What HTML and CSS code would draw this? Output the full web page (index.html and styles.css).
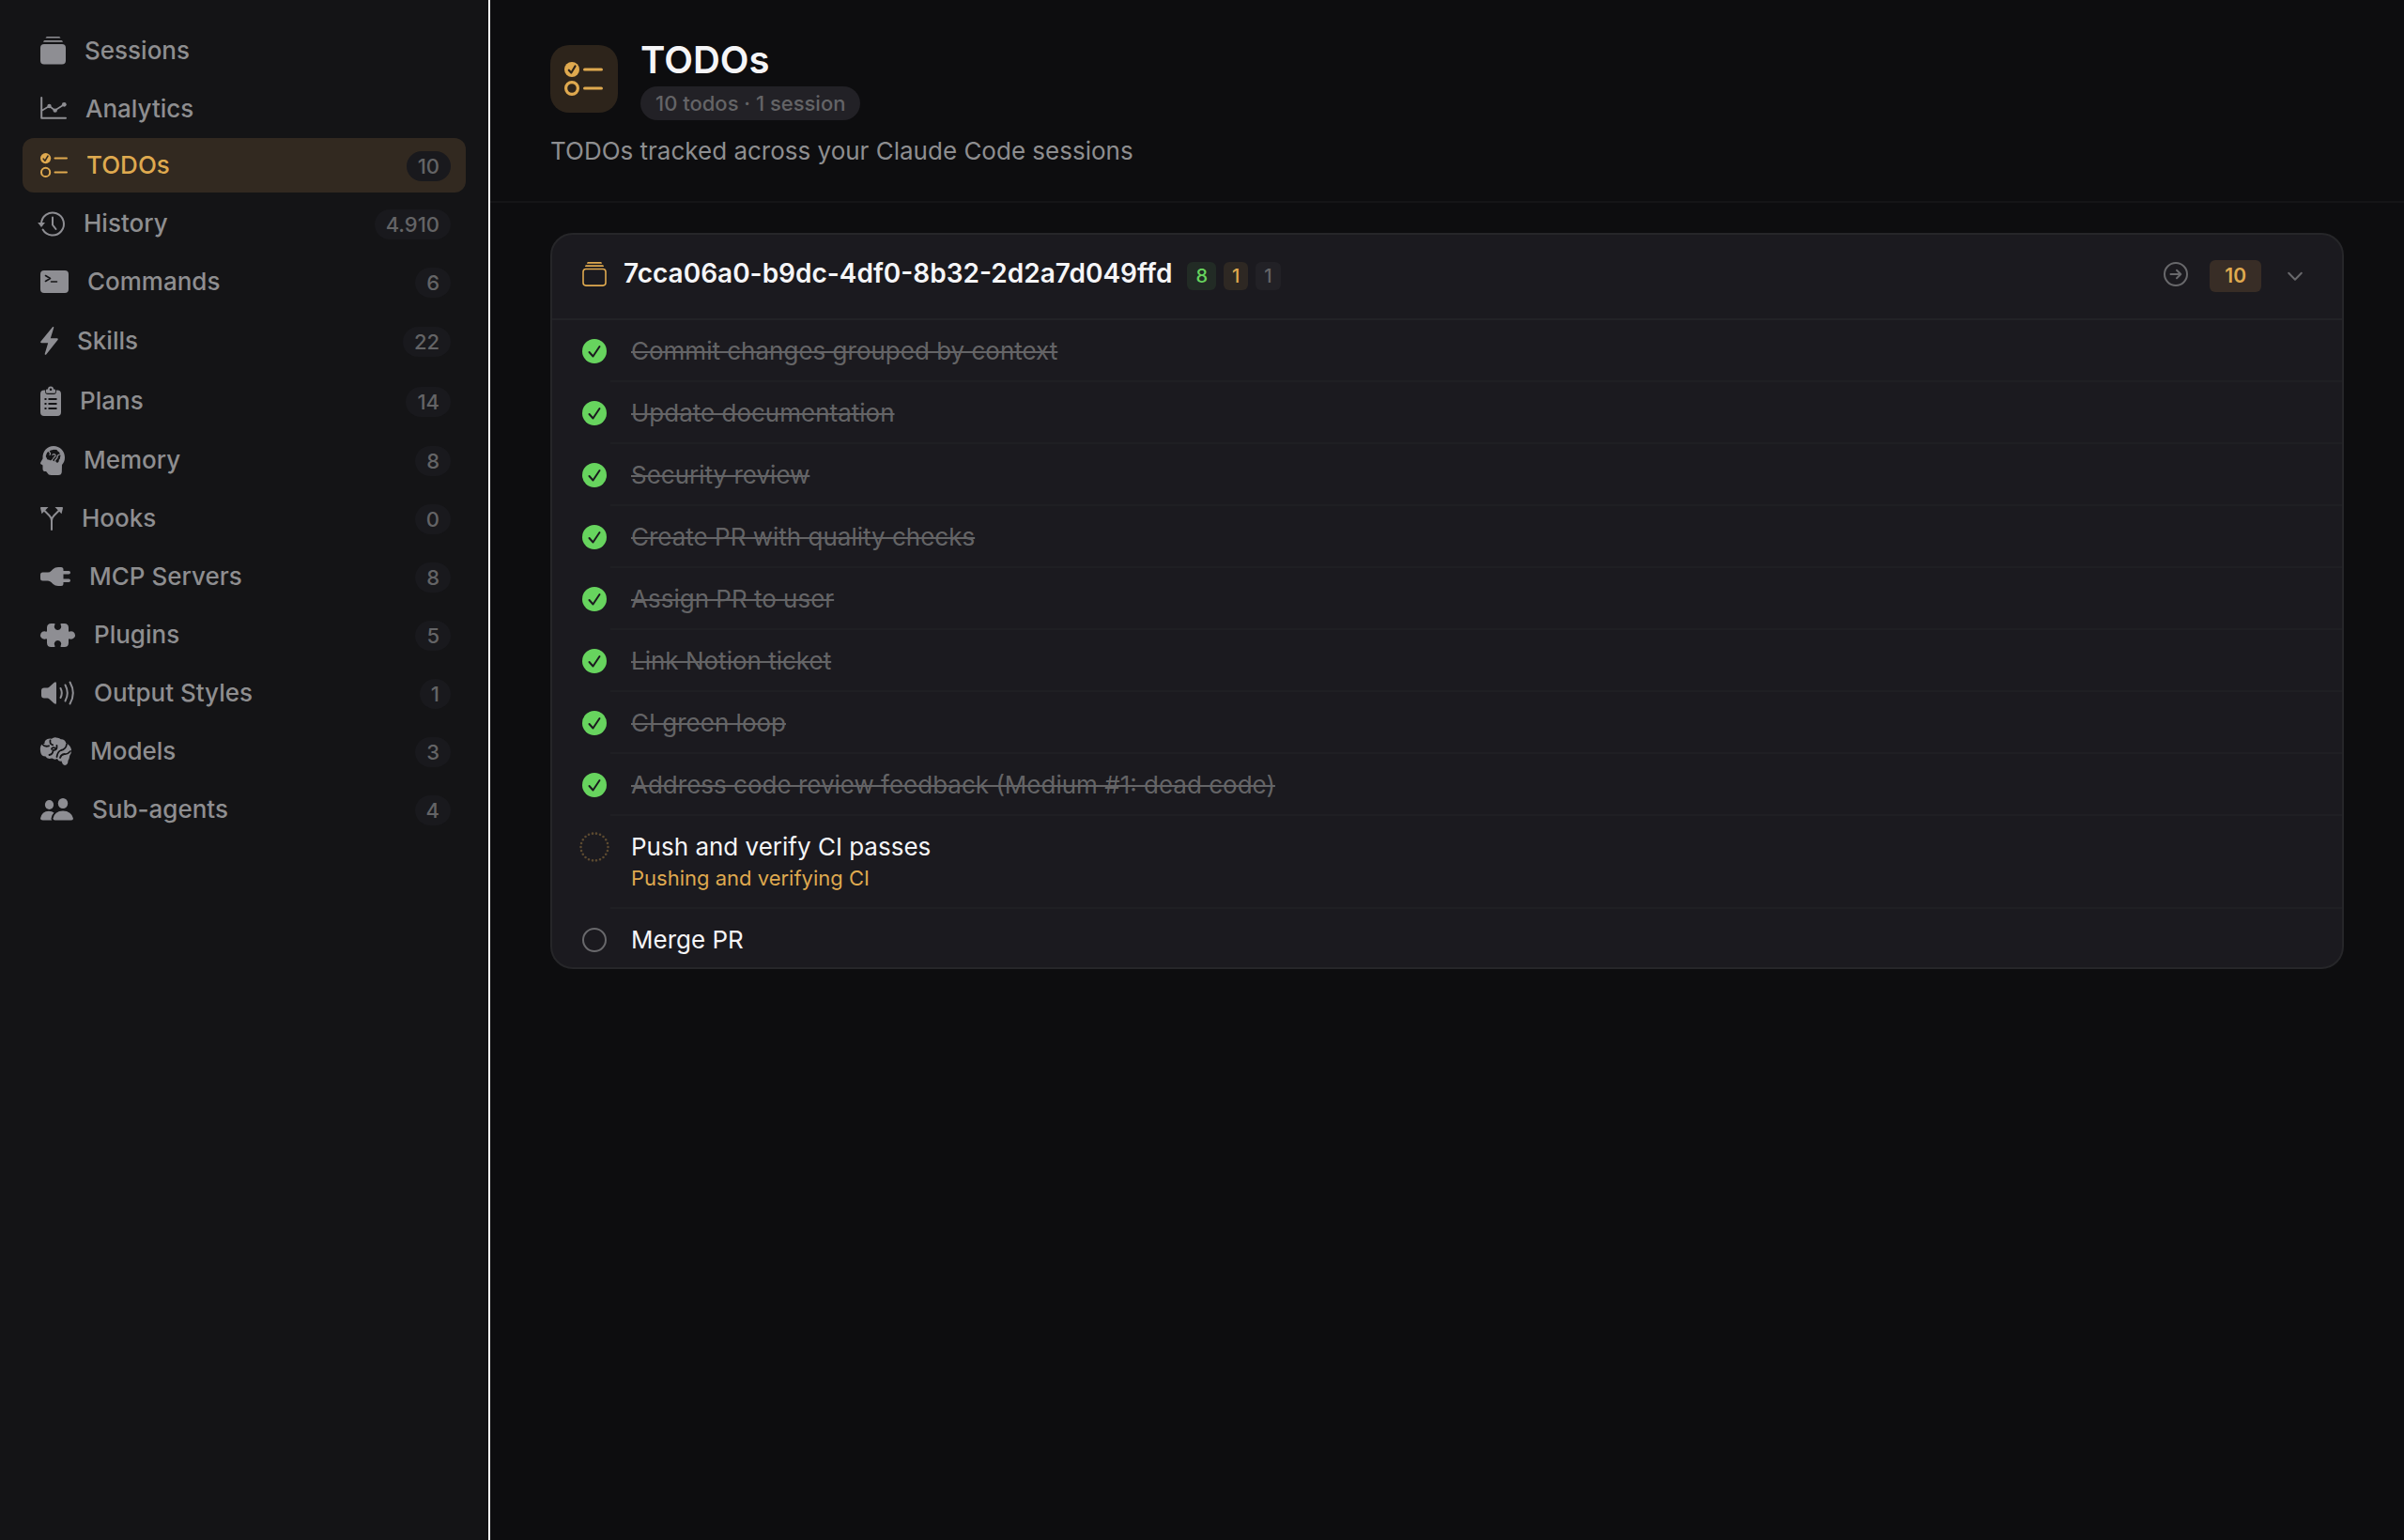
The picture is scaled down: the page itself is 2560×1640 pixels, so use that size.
FILE: index.html
```html
<!DOCTYPE html>
<html lang="en">
<head>
<meta charset="utf-8">
<meta name="viewport" content="width=device-width, initial-scale=1">
<title>TODOs</title>
<link rel="stylesheet" href="styles.css">
</head>
<body>
<div class="app">
  <nav class="sidebar" aria-label="Sections">
    <a class="nav-item nav-item--roomy" href="#sessions">
      <svg class="icon" width="27" height="30" viewBox="0 0 27 30"><path d="M7 0h13q1 0 1.500 1.500h-16q.5-1.500 1.500-1.500zM4.500 4h18q1 0 1.500 1.800h-21q.5-1.800 1.500-1.800z"/><rect y="8" width="27" height="21.500" rx="4"/></svg>
      <span class="nav-label">Sessions</span>
    </a>
    <a class="nav-item nav-item--snug" href="#analytics">
      <svg class="icon" width="28" height="25" viewBox="0 0 28 25"><path class="line" d="M1.200 1v21.800H27"/><path class="line line--thin" d="M2 14.500l7.500-4.500 6 4.500L25 8.500"/><circle cx="9.500" cy="10" r="2.200"/><circle cx="15.700" cy="14.600" r="2.200"/><circle cx="25.300" cy="8.300" r="2.400"/></svg>
      <span class="nav-label">Analytics</span>
    </a>
    <a class="nav-item nav-item--active" href="#todos" aria-current="page">
      <svg class="icon" width="29" height="26" viewBox="0 0 29 26"><circle cx="5.600" cy="5.600" r="5.600"/><path class="cut" d="M3.200 6.200l1.800 2 3-5"/><circle class="line" cx="5.600" cy="20.400" r="4.600"/><path class="line" d="M15.500 5.600H28M15.500 20.400H28"/></svg>
      <span class="nav-label">TODOs</span><span class="count">10</span>
    </a>
    <a class="nav-item" href="#history">
      <svg class="icon icon--overhang" width="29" height="27" viewBox="0 0 29 27"><path class="line" d="M4 13.500a12 12 0 1 1 1.600 6"/><path d="M.2 12h7.800L4 17z"/><path class="line" d="M16 6.500v8l3.500 4.500"/></svg>
      <span class="nav-label">History</span><span class="count">4.910</span>
    </a>
    <a class="nav-item" href="#commands">
      <svg class="icon" width="30" height="24" viewBox="0 0 30 24"><rect width="30" height="24" rx="4"/><path class="cut" d="M5.500 5.500l5 3-5 3M11.500 12h6"/></svg>
      <span class="nav-label">Commands</span><span class="count">6</span>
    </a>
    <a class="nav-item nav-item--roomy" href="#skills">
      <svg class="icon" width="19" height="30" viewBox="0 0 19 30"><path d="M12.800.5c.8-.9 1.800-.3 1.400.8L10.800 12.300h6.900c1.100 0 1.500.9.800 1.700L6.200 29.400c-.8.900-1.800.3-1.400-.8L8.200 17.300H1.300c-1.100 0-1.500-.9-.8-1.700z"/></svg>
      <span class="nav-label">Skills</span><span class="count">22</span>
    </a>
    <a class="nav-item nav-item--roomy" href="#plans">
      <svg class="icon" width="22" height="31" viewBox="0 0 22 31"><path fill-rule="evenodd" d="M4 3.500h1.200v1.800q0 2.700 2.700 2.700h6.200q2.700 0 2.700-2.700V3.500H18q4 0 4 4V27q0 4-4 4H4q-4 0-4-4V7.500q0-4 4-4zM4.500 12v2h2v-2zM8.500 12v2h9v-2zM4.500 17v2h2v-2zM8.500 17v2h9v-2zM4.500 22v2h2v-2zM8.500 22v2h9v-2z"/><path fill-rule="evenodd" d="M8 2.500a3 3 0 0 1 6 0h1q1 0 1 1v2q0 1.300-1.300 1.300H7.300Q6 6.800 6 5.500v-2q0-1 1-1zM11 1.500a1.300 1.300 0 1 0 .1 2.600 1.300 1.300 0 0 0-.1-2.600z"/></svg>
      <span class="nav-label">Plans</span><span class="count">14</span>
    </a>
    <a class="nav-item" href="#memory">
      <svg class="icon" width="26" height="31" viewBox="0 0 26 31"><path d="M14 0C20.800 0 26 5 26 12c0 3.500-1 5.500-3 8l-.2 7.500Q22.600 31 19 31h-7.500q-3 0-4.200-2.500-.6-1.500-1.500-1.500H5q-2.500 0-2.500-2.800v-3.400q-.2-.8-1.200-1Q-.6 19.300.2 17.500L2.500 13.500C2 5.500 7.200 0 14 0z"/><path class="hole" d="M6.500 8.500Q7 5.500 9.500 6q1-2.200 3.300-1.800 1.200-.9 2.700-.3 2.500-.3 3 1.600 2.500.8 2.200 3 1.500 1.600.3 3.500.3 1.800-1.200 2.800.3 2.200-1.400 2.900-1.800.2-2.100-1.700-2.700.6-3.700-1.500-1.200 1.400-3 .2-2.800.2-3-2.200-1.500-1.500-.1-4z"/><path class="fold" d="M9.500 6.500q1.800 1.200.5 2.800M12.500 14.500q1.500-.2 1.800-2.500 2.200-.3 1.600-2.600-1.500-1.700-3 0M20.500 9q-2.800.5-2.600 3.500l-2.500 3"/></svg>
      <span class="nav-label">Memory</span><span class="count">8</span>
    </a>
    <a class="nav-item" href="#hooks">
      <svg class="icon" width="24" height="25" viewBox="0 0 24 25"><path class="line" d="M12 24v-9.500Q12 11.500 9.500 9L4.500 4M12 14.500q0-3 2.500-5.500l5-5"/><path d="M.8 0h7.700L1.500 7.300 0 1q0-1 .8-1zM23.200 0h-7.700l7 7.300L24 1q0-1-.8-1z"/></svg>
      <span class="nav-label">Hooks</span><span class="count">0</span>
    </a>
    <a class="nav-item" href="#mcp">
      <svg class="icon" width="32" height="20" viewBox="0 0 32 20"><path d="M2.500 5.500H8Q10 5.500 11.500 4l2-2Q15.500 0 19 0h3q2.500 0 2.500 2.500V4h5.800a1.700 1.700 0 0 1 0 3.400h-5.800v5.200h5.800a1.700 1.700 0 0 1 0 3.400h-5.800v1.500Q24.500 20 22 20h-3q-3.500 0-5.500-2l-2-2Q10 14.500 8 14.500H2.500Q0 14.500 0 12V8q0-2.500 2.500-2.500z"/></svg>
      <span class="nav-label">MCP Servers</span><span class="count">8</span>
    </a>
    <a class="nav-item" href="#plugins">
      <svg class="icon" width="37" height="25" viewBox="0 0 37 25"><path d="M11.500 0h3.300q1.200 0 .6 1.300-1.200 2-.2 3.800 1.100 1.900 3.300 1.900t3.300-1.900q1-1.800-.2-3.800Q21 0 22.200 0h3.300Q30 0 30 4.500v3q0 1.700 1.500 1Q35 7.800 36.500 10.500q1 2 0 4-1.500 2.700-5 2-1.500-.7-1.500 1v3Q30 25 25.500 25h-3.300q-1.200 0-.6-1.300 1.200-2 .2-3.800-1.100-1.900-3.300-1.900t-3.300 1.900q-1 1.800.2 3.800.6 1.300-.6 1.300h-3.300Q7 25 7 20.500v-3q0-1.700-1.500-1-3.500.7-5-2-1-2 0-4 1.500-2.700 5-2 1.500.7 1.500-1v-3Q7 0 11.500 0z"/></svg>
      <span class="nav-label">Plugins</span><span class="count">5</span>
    </a>
    <a class="nav-item" href="#styles">
      <svg class="icon" width="37" height="26" viewBox="0 0 37 26"><path d="M4 7.500h3.500q1 0 1.800-.7L14.500 2q2.500-1.800 2.500.8v20.400q0 2.600-2.500.8L9.300 19.200q-.8-.7-1.800-.7H4q-3 0-3-3v-5q0-3 3-3z"/><path class="line" d="M21.500 8q2.600 5 0 10M26.500 4.500q4.600 8.500 0 17M31.500 1.500q6.600 11.500 0 23"/></svg>
      <span class="nav-label">Output Styles</span><span class="count">1</span>
    </a>
    <a class="nav-item" href="#models">
      <svg class="icon" width="33" height="30" viewBox="0 0 33 30"><path d="M4.500 7Q4 3.500 7.500 2q2.500-1 4.500-.2Q14.500-.5 18 .7q2.200-.2 3.700 1.600 4.300-.3 5.600 3.900 5.200 2.800 5.700 7.300.4 3.500-1.800 6.300-.2 3-1.700 5.200 0 4.500-3.500 5-2.500-.3-3.500-4.500-3.500.8-4.500-2.500-3.200 1.500-5.500-.5-5.300 1.500-7-2-4.500 0-5.300-4.500Q-1 10.500 1.500 7.500z"/><path class="seam" d="M2 7.500q3 3.200 7 1.800M10.500 3.500q-.8 4 2.700 4.800M9.500 19q4-.8 4-5 M13.500 14q4.500.2 4-5M15.500 11.500q-3-1-3.500 1.300M28 7.500q-.7 5.500-6 6.500-3.500 1-4.500 7M32 15q-3 3.500-6.500 3-3.500.5-4.500 4"/></svg>
      <span class="nav-label">Models</span><span class="count">3</span>
    </a>
    <a class="nav-item" href="#subagents">
      <svg class="icon" width="35" height="24" viewBox="0 0 35 24"><ellipse cx="9.500" cy="7" rx="4.600" ry="5"/><ellipse cx="24" cy="5.500" rx="5.200" ry="5.500"/><path d="M2.500 23.500Q0 23.500 0 21.500 1.500 14 9 13.800q3.500 0 5.500 1.600-3 2.600-3 6.300 0 1 .8 1.800z"/><path d="M15.500 23.500q-2 0-2-2 1.500-7.700 10.500-8 9 .3 11 8 0 2-2 2z"/></svg>
      <span class="nav-label">Sub-agents</span><span class="count">4</span>
    </a>
  </nav>

  <main class="main">
    <header class="page-header">
      <div class="page-heading">
        <div class="page-icon">
          <svg class="icon" width="42" height="36" viewBox="0 0 42 36"><circle cx="8" cy="8" r="8"/><path class="cut cut--large" d="M4.800 8.700l2.500 2.800 4.200-7"/><circle class="line line--thick" cx="8" cy="28" r="6.400"/><path class="line line--thick" d="M21.600 8H39.400M21.600 28H39.400"/></svg>
        </div>
        <div class="page-titles">
          <h1 class="page-title">TODOs</h1>
          <span class="summary">10 todos · 1 session</span>
        </div>
      </div>
      <p class="page-subtitle">TODOs tracked across your Claude Code sessions</p>
    </header>

    <section class="card" aria-labelledby="session-name">
      <header class="card-header">
        <svg class="icon icon--accent icon--raised" width="26" height="26" viewBox="0 0 26 26"><path d="M6 0h14q.8.4 1 1.700H5q.2-1.300 1-1.700zM4 3.300h18q.8.3 1 1.700H3q.2-1.400 1-1.700z"/><rect class="line line--thin" x="1" y="7.500" width="24" height="17.600" rx="3"/></svg>
        <h2 class="card-title" id="session-name">7cca06a0-b9dc-4df0-8b32-2d2a7d049ffd</h2>
        <div class="tags">
          <span class="tag tag--done">8</span>
          <span class="tag tag--active">1</span>
          <span class="tag">1</span>
        </div>
        <div class="card-actions">
          <button class="icon-button" type="button" aria-label="Open session"><svg class="icon icon--raised" width="26" height="26" viewBox="0 0 26 26"><circle class="line" cx="13" cy="13" r="12"/><path class="line" d="M7.500 13h10.500M14 8.800l4.300 4.200-4.300 4.200"/></svg></button>
          <span class="total">10</span>
          <button class="icon-button" type="button" aria-label="Collapse" aria-expanded="true"><svg class="icon" width="16" height="10" viewBox="0 0 16 10"><path class="line" d="M1.200 1.800L8 8.800l6.800-7"/></svg></button>
        </div>
      </header>
      <ul class="todos">
        <li class="todo todo--done"><svg class="status" width="26" height="26" viewBox="0 0 26 26"><circle cx="13" cy="13" r="13"/><path class="tick" d="M7.500 14l4 4.500L18.500 8"/></svg><div class="todo-body"><span class="todo-text">Commit changes grouped by context</span></div></li>
        <li class="todo todo--done"><svg class="status" width="26" height="26" viewBox="0 0 26 26"><circle cx="13" cy="13" r="13"/><path class="tick" d="M7.500 14l4 4.500L18.500 8"/></svg><div class="todo-body"><span class="todo-text">Update documentation</span></div></li>
        <li class="todo todo--done"><svg class="status" width="26" height="26" viewBox="0 0 26 26"><circle cx="13" cy="13" r="13"/><path class="tick" d="M7.500 14l4 4.500L18.500 8"/></svg><div class="todo-body"><span class="todo-text">Security review</span></div></li>
        <li class="todo todo--done"><svg class="status" width="26" height="26" viewBox="0 0 26 26"><circle cx="13" cy="13" r="13"/><path class="tick" d="M7.500 14l4 4.500L18.500 8"/></svg><div class="todo-body"><span class="todo-text">Create PR with quality checks</span></div></li>
        <li class="todo todo--done"><svg class="status" width="26" height="26" viewBox="0 0 26 26"><circle cx="13" cy="13" r="13"/><path class="tick" d="M7.500 14l4 4.500L18.500 8"/></svg><div class="todo-body"><span class="todo-text">Assign PR to user</span></div></li>
        <li class="todo todo--done"><svg class="status" width="26" height="26" viewBox="0 0 26 26"><circle cx="13" cy="13" r="13"/><path class="tick" d="M7.500 14l4 4.500L18.500 8"/></svg><div class="todo-body"><span class="todo-text">Link Notion ticket</span></div></li>
        <li class="todo todo--done"><svg class="status" width="26" height="26" viewBox="0 0 26 26"><circle cx="13" cy="13" r="13"/><path class="tick" d="M7.500 14l4 4.500L18.500 8"/></svg><div class="todo-body"><span class="todo-text">CI green loop</span></div></li>
        <li class="todo todo--done"><svg class="status" width="26" height="26" viewBox="0 0 26 26"><circle cx="13" cy="13" r="13"/><path class="tick" d="M7.500 14l4 4.500L18.500 8"/></svg><div class="todo-body"><span class="todo-text">Address code review feedback (Medium #1: dead code)</span></div></li>
        <li class="todo"><svg class="status" width="26" height="26" viewBox="0 0 26 26"><circle class="dots" cx="13" cy="13" r="14.500" pathLength="220"/></svg><div class="todo-body"><span class="todo-text">Push and verify CI passes</span><span class="todo-note">Pushing and verifying CI</span></div></li>
        <li class="todo"><svg class="status" width="26" height="26" viewBox="0 0 26 26"><circle class="ring" cx="13" cy="13" r="12"/></svg><div class="todo-body"><span class="todo-text">Merge PR</span></div></li>
      </ul>
    </section>
  </main>
</div>
</body>
</html>
```
FILE: styles.css
```css
:root {
  --bg: #0d0d0f;
  --sidebar: #141416;
  --card: #1b1a1f;
  --text: #f5f5f7;
  --muted: #8e8e93;
  --muted-text: #8e8e90;
  --dim: #646466;
  --accent: #dfa94f;
  --green: #67d45e;
}

* { box-sizing: border-box; }

body {
  margin: 0;
  background: var(--bg);
  color: var(--text);
  font-family: Inter, "Liberation Sans", sans-serif;
  font-size: 26px;
  line-height: 32px;
}

h1, h2, p, ul { margin: 0; padding: 0; }

.app { display: flex; min-height: 100vh; }

.icon { display: block; flex: none; fill: currentColor; overflow: visible; }
.icon .line { fill: none; stroke: currentColor; stroke-width: 2; stroke-linecap: round; stroke-linejoin: round; }
.icon .line--thin { stroke-width: 1.600; }
.icon .line--thick { stroke-width: 3.200; }
.icon .cut { fill: none; stroke: var(--cut, var(--sidebar)); stroke-width: 1.600; stroke-linecap: round; stroke-linejoin: round; }
.icon .cut--large { stroke-width: 2.200; }
.icon .hole { fill: var(--sidebar); }
.icon .fold { fill: none; stroke: currentColor; stroke-width: 1.200; stroke-linecap: round; }
.icon .seam { fill: none; stroke: var(--sidebar); stroke-width: 1.800; stroke-linecap: round; }
.icon--overhang { margin-left: -3px; }
.icon--accent { color: var(--accent); }
.icon--raised { margin-bottom: 4px; }

/* Sidebar */
.sidebar {
  display: flex;
  flex: none;
  flex-direction: column;
  gap: 4px;
  width: 522px;
  padding: 24px;
  background: var(--sidebar);
  border-right: 2px solid #fff;
}

.nav-item {
  display: flex;
  align-items: center;
  gap: 20px;
  height: 58px;
  padding: 0 16px 0 19px;
  border-radius: 12px;
  color: var(--muted);
  font-weight: 500;
  text-decoration: none;
}
.nav-item--roomy { height: 60px; }
.nav-item--snug { height: 55px; }
.nav-item--active { --cut: #322920; background: #322920; color: var(--accent); }
.nav-label { flex: 1; color: var(--muted-text); }
.nav-item--active .nav-label { color: inherit; }

.count {
  height: 32px;
  margin-top: 2px;
  padding: 0 12px;
  border-radius: 16px;
  background: #19191d;
  color: var(--dim);
  font-size: 22px;
}

/* Page header */
.main { flex: 1; min-width: 0; }

.page-header {
  padding: 40px 64px 37px;
  border-bottom: 2px solid #151517;
}
.page-heading { display: flex; align-items: center; gap: 24px; }
.page-icon {
  --cut: #2d241b;
  display: grid;
  place-items: center;
  width: 72px;
  height: 72px;
  border-radius: 20px;
  background: #2d241b;
  color: var(--accent);
}
.page-titles { display: flex; flex-direction: column; align-items: flex-start; gap: 4px; }
.page-title { font-size: 40px; font-weight: 600; line-height: 48px; }
.summary {
  padding: 0 16px;
  border-radius: 18px;
  background: #222126;
  color: var(--dim);
  font-size: 22px;
  font-weight: 500;
  line-height: 36px;
}
.page-subtitle { margin-top: 17px; color: var(--muted-text); }

/* Session card */
.card {
  margin: 32px 64px;
  overflow: hidden;
  border: 2px solid #262629;
  border-radius: 24px;
  background: var(--card);
}
.card-header {
  display: flex;
  align-items: center;
  padding: 24px 42px 25px 32px;
  border-bottom: 2px solid #222226;
}
.card-title {
  align-self: flex-start;
  margin-left: 18px;
  font-size: 28px;
  font-weight: 600;
  line-height: 34px;
}
.tags { display: flex; gap: 8px; margin-left: 16px; }
.tag {
  padding: 0 9px;
  border-radius: 6px;
  background: #222126;
  color: var(--dim);
  font-size: 20px;
  font-weight: 500;
  line-height: 30px;
}
.tag--done { background: #222b25; color: var(--green); }
.tag--active { background: #2e2823; color: var(--accent); }

.card-actions { display: flex; align-items: center; height: 40px; margin-left: auto; }
.icon-button {
  padding: 0;
  border: 0;
  background: none;
  color: #68686b;
  cursor: pointer;
}
.total {
  margin: 0 28px 0 23px;
  padding: 0 16px;
  border-radius: 6px;
  background: #382d26;
  color: var(--accent);
  font-size: 21px;
  font-weight: 600;
  line-height: 34px;
}

/* Todo rows */
.todos { list-style: none; }
.todo { display: flex; gap: 4px; padding-left: 32px; }
.status { flex: none; margin-top: 20px; overflow: visible; fill: var(--green); }
.status .tick { fill: none; stroke: var(--card); stroke-width: 2; stroke-linecap: round; stroke-linejoin: round; }
.status .ring { fill: none; stroke: #68686b; stroke-width: 2; }
.status .dots { fill: none; stroke: #5c4a30; stroke-width: 2.600; stroke-linecap: round; stroke-dasharray: 0 10; }
.todo-body {
  display: flex;
  flex: 1;
  flex-direction: column;
  gap: 1px;
  padding: 17px 32px 15px 22px;
  border-bottom: 2px solid #1f1f23;
}
.todo:last-child .todo-body { padding-bottom: 13px; border-bottom: 0; }
.todo--done .todo-text { color: var(--dim); text-decoration: line-through 2px; }
.todo-note { color: var(--accent); font-size: 22px; }
```
